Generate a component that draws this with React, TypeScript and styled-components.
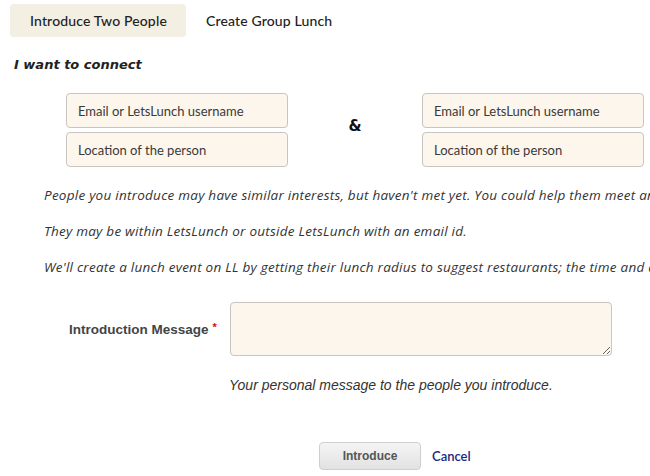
import React from 'react';
import styled, { createGlobalStyle } from 'styled-components';

const GlobalStyle = createGlobalStyle`
  html, body {
    margin: 0;
    padding: 0;
    background: #fff;
    overflow: hidden;
  }
  body {
    font-family: Lato, 'Open Sans', sans-serif;
    color: #333;
  }
`;

const Page = styled.div`
  width: 650px;
  height: 476px;
  overflow: hidden;
  display: flex;
  flex-direction: column;
`;

const Tabs = styled.div`
  display: flex;
  align-items: center;
  padding: 4px 0 0 10px;
`;

const Tab = styled.div<{ $active?: boolean }>`
  height: 33px;
  display: flex;
  align-items: center;
  padding: 0 19px 0 20px;
  border-radius: 4px;
  font-size: 14px;
  font-weight: 500;
  letter-spacing: 0.15px;
  color: #222;
  background: ${({ $active }) => ($active ? '#f3efe3' : 'transparent')};
`;

const Heading = styled.div`
  margin: 20px 0 0 14px;
  font-family: 'DejaVu Sans', Verdana, sans-serif;
  font-size: 13px;
  font-weight: bold;
  font-style: italic;
  color: #222;
`;

const ConnectRow = styled.div`
  display: flex;
  align-items: center;
  margin: 21px 0 0 66px;
`;

const PersonFields = styled.div`
  display: flex;
  flex-direction: column;
  gap: 4px;
  width: 222px;
`;

const Amp = styled.div`
  width: 134px;
  text-align: center;
  font-family: 'DejaVu Sans', Verdana, sans-serif;
  font-weight: bold;
  font-size: 15px;
  color: #111;
  padding-bottom: 9px;
`;

const Field = styled.input`
  box-sizing: border-box;
  height: 35px;
  width: 100%;
  border: 1px solid #c9c4bf;
  border-radius: 4px;
  background: #fdf6ec;
  padding: 0 11px;
  font-family: Lato, sans-serif;
  font-size: 13px;
  color: #444;
  outline: none;
  &::placeholder {
    color: #3a3a3a;
  }
`;

const Notes = styled.div`
  margin: 19px 0 0 44px;
  display: flex;
  flex-direction: column;
  gap: 18px;
`;

const Note = styled.p`
  margin: 0;
  white-space: nowrap;
  font-family: 'Open Sans', Lato, sans-serif;
  font-size: 13.5px;
  letter-spacing: 0.25px;
  font-style: italic;
  line-height: 18px;
  color: #333;
`;

const MessageRow = styled.div`
  display: flex;
  align-items: center;
  margin: 26px 0 0 69px;
`;

const Label = styled.label`
  width: 161px;
  font-family: 'Liberation Sans', Arial, sans-serif;
  font-weight: bold;
  font-size: 13.5px;
  color: #444;
`;

const Required = styled.span`
  color: #e00;
  margin-left: 4px;
  vertical-align: 3px;
  font-size: 11px;
`;

const MessageBox = styled.textarea`
  box-sizing: border-box;
  width: 382px;
  height: 54px;
  border: 1px solid #c9c4bf;
  border-radius: 4px;
  background: #fdf6ec;
  resize: vertical;
  outline: none;
`;

const Help = styled.div`
  margin: 21px 0 0 229px;
  font-family: 'Liberation Sans', Arial, sans-serif;
  font-style: italic;
  font-size: 14px;
  color: #333;
`;

const Actions = styled.div`
  display: flex;
  align-items: center;
  gap: 11px;
  margin: 49px 0 0 319px;
`;

const Button = styled.button`
  width: 102px;
  height: 28px;
  border: 1px solid #cfcfcf;
  border-radius: 4px;
  background: linear-gradient(180deg, #f4f4f4 0%, #e2e2e2 100%);
  font-family: 'Liberation Sans', Arial, sans-serif;
  font-weight: bold;
  font-size: 12px;
  color: #555;
`;

const CancelLink = styled.a`
  font-size: 13px;
  font-weight: 600;
  color: #1b2a80;
  text-decoration: none;
`;

const Person = () => (
  <PersonFields>
    <Field placeholder="Email or LetsLunch username" />
    <Field placeholder="Location of the person" />
  </PersonFields>
);

export default function App() {
  return (
    <Page>
      <GlobalStyle />
      <Tabs>
        <Tab $active>Introduce Two People</Tab>
        <Tab>Create Group Lunch</Tab>
      </Tabs>
      <Heading>I want to connect</Heading>
      <ConnectRow>
        <Person />
        <Amp>&amp;</Amp>
        <Person />
      </ConnectRow>
      <Notes>
        <Note>People you introduce may have similar interests, but haven't met yet. You could help them meet and get to know each other.</Note>
        <Note>They may be within LetsLunch or outside LetsLunch with an email id.</Note>
        <Note>We'll create a lunch event on LL by getting their lunch radius to suggest restaurants; the time and date can be set later.</Note>
      </Notes>
      <MessageRow>
        <Label>
          Introduction Message<Required>*</Required>
        </Label>
        <MessageBox />
      </MessageRow>
      <Help>Your personal message to the people you introduce.</Help>
      <Actions>
        <Button>Introduce</Button>
        <CancelLink href="#">Cancel</CancelLink>
      </Actions>
    </Page>
  );
}
